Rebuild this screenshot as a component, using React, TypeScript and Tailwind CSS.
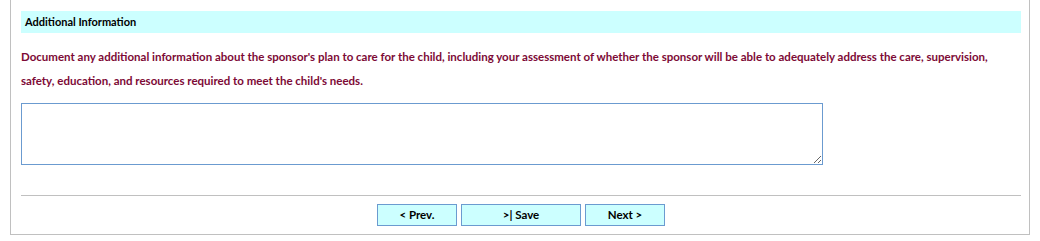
import React from 'react';

const btnClass =
    'h-[22px] border border-[#6b9bd0] bg-[#ccffff] text-[11.5px] font-bold text-black leading-none';

const App: React.FC = () => {
    return (
        <div className="w-[1040px] h-[241px] bg-white" style={{ fontFamily: 'Lato, "Open Sans", sans-serif' }}>
            <div className="ml-[10px] w-[1020px] h-[235px] border-l border-r border-b border-[#c0c0c0] pl-[10px]">
                <div className="w-[1000px] pt-[11px]">
                    <div className="h-[22px] bg-[#ccffff] pl-[4px] text-[11px] font-bold leading-[22px] text-black">
                        Additional Information
                    </div>
                    <p className="mt-[12px] text-[11.5px] font-bold leading-[24px] text-[#7d0a36]">
                        Document any additional information about the sponsor's plan to care for the child, including your assessment of whether the sponsor will be able to adequately address the care, supervision, safety, education, and resources required to meet the child's needs.
                    </p>
                    <textarea className="mt-[10px] block w-[802px] h-[62px] border border-[#6b9bd0] outline-none" />
                    <hr className="mt-[30px] border-0 border-t border-[#c0c0c0]" />
                    <div className="mt-[8px] flex justify-center gap-1">
                        <button className={`${btnClass} w-[80px]`}>&lt; Prev.</button>
                        <button className={`${btnClass} w-[120px]`}>&gt;| Save</button>
                        <button className={`${btnClass} w-[80px]`}>Next &gt;</button>
                    </div>
                </div>
            </div>
        </div>
    );
};

export default App;
